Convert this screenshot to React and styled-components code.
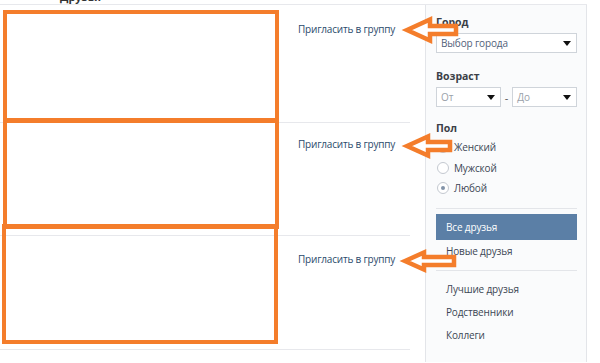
import React from "react";
import styled, { createGlobalStyle } from "styled-components";

const Global = createGlobalStyle`
  html, body { margin: 0; padding: 0; background: #fff; }
  body { font-family: "Open Sans", "Liberation Sans", Arial, sans-serif; }
`;

const ORANGE = "#f47d2b";

const Page = styled.div`
  position: relative;
  width: 600px;
  height: 363px;
  overflow: hidden;
  background: #fff;
`;

const Header = styled.div`
  width: 587px;
  height: 5px;
  overflow: hidden;
  border-bottom: 1px solid #e7e8ec;
  padding-left: 60px;
  box-sizing: border-box;
`;

const HeaderTitle = styled.div`
  margin-top: -10px;
  font-size: 11px;
  line-height: 14px;
  font-weight: 700;
  color: #333;
`;

const Body = styled.div`
  display: flex;
  align-items: stretch;
  height: 357px;
`;

const Content = styled.div`
  width: 425px;
  display: flex;
  flex-direction: column;
`;

const Row = styled.div`
  height: ${(p) => p.$h}px;
  box-sizing: border-box;
  padding-top: ${(p) => p.$pad}px;
  padding-left: 298px;
  margin-right: 15px;
  border-bottom: 1px solid #e7e8ec;
  font-size: 10px;
  line-height: 13px;
`;

const InviteLink = styled.a`
  display: block;
  font-size: 10px;
  line-height: 13px;
  letter-spacing: -0.2px;
  color: #2b4a6b;
  text-decoration: none;
  cursor: pointer;
`;

const Sidebar = styled.aside`
  width: 162px;
  box-sizing: border-box;
  background: #fafbfc;
  border-left: 1px solid #e3e5e9;
  border-right: 1px solid #e3e5e9;
  padding: 10px 9px 0 10px;
  display: flex;
  flex-direction: column;
`;

const Label = styled.div`
  font-size: 10.5px;
  line-height: 14px;
  font-weight: 700;
  color: #3a3f47;
  margin-top: ${(p) => p.$mt || 0}px;
`;

const SelectBox = styled.div`
  height: 20px;
  box-sizing: border-box;
  border: 1px solid #cfd4da;
  background: #fff;
  display: flex;
  align-items: center;
  justify-content: space-between;
  padding: 0 5px 0 4px;
  font-size: 10px;
  letter-spacing: -0.15px;
  color: ${(p) => (p.$muted ? "#9aa1a9" : "#52627a")};
  flex: ${(p) => (p.$grow ? 1 : "none")};
`;

const Caret = styled.span`
  width: 0;
  height: 0;
  border-left: 4px solid transparent;
  border-right: 4px solid transparent;
  border-top: 5px solid #111;
`;

const FieldGap = styled.div`
  margin-top: 4px;
`;

const AgeRow = styled.div`
  display: flex;
  align-items: center;
  gap: 4px;
  margin-top: 4px;
`;

const Dash = styled.span`
  font-size: 11px;
  color: #555;
`;

const RadioList = styled.div`
  display: flex;
  flex-direction: column;
  margin-top: 2px;
`;

const RadioRow = styled.div`
  display: flex;
  align-items: center;
  height: 20.5px;
  gap: 5px;
  font-size: 10px;
  letter-spacing: -0.15px;
  color: #3c4654;
`;

const RadioCircle = styled.span`
  width: 12px;
  height: 12px;
  box-sizing: border-box;
  border-radius: 50%;
  border: 1px solid #c4c9d0;
  background: #fff;
  display: flex;
  align-items: center;
  justify-content: center;
  margin-left: 1px;
  &::after {
    content: "";
    width: 4px;
    height: 4px;
    border-radius: 50%;
    background: ${(p) => (p.$on ? "#8293a8" : "transparent")};
  }
`;

const Divider = styled.div`
  height: 1px;
  background: #e3e5e9;
  margin: ${(p) => p.$m};
`;

const MenuItem = styled.div`
  height: ${(p) => (p.$active ? 26 : 23)}px;
  display: flex;
  align-items: center;
  padding-left: 10px;
  font-size: 10px;
  letter-spacing: -0.15px;
  color: ${(p) => (p.$active ? "#fff" : "#3c4654")};
  background: ${(p) => (p.$active ? "#5b7fa6" : "transparent")};
`;

const Frame = styled.div`
  position: absolute;
  box-sizing: border-box;
  border: 4.5px solid ${ORANGE};
  left: ${(p) => p.$x}px;
  top: ${(p) => p.$y}px;
  width: ${(p) => p.$w}px;
  height: ${(p) => p.$h}px;
  pointer-events: none;
`;

const ArrowLayer = styled.svg`
  position: absolute;
  left: 0;
  top: 0;
  pointer-events: none;
`;

const rows = [
  { h: 118, pad: 18 },
  { h: 113, pad: 15 },
  { h: 114, pad: 17 },
];

const frames = [
  { x: 3, y: 10, w: 276, h: 113 },
  { x: 3, y: 118, w: 276, h: 111 },
  { x: 2, y: 224, w: 276, h: 120 },
];

function arrow(tipX, tipY, headX, headHalf, shaftHalf, endX) {
  return [
    [tipX, tipY],
    [headX, tipY - headHalf],
    [headX, tipY - shaftHalf],
    [endX, tipY - shaftHalf],
    [endX, tipY + shaftHalf],
    [headX, tipY + shaftHalf],
    [headX, tipY + headHalf],
  ]
    .map((p) => p.join(","))
    .join(" ");
}

const arrows = [
  arrow(407, 30, 430, 10.5, 4, 456),
  arrow(407, 146, 428, 9.5, 4, 450),
  arrow(405, 261, 424, 8.5, 4, 454),
];

export default function App() {
  return (
    <Page>
      <Global />
      <Header>
        <HeaderTitle>Друзья</HeaderTitle>
      </Header>
      <Body>
        <Content>
          {rows.map((r, i) => (
            <Row key={i} $h={r.h} $pad={r.pad}>
              <InviteLink>Пригласить в группу</InviteLink>
            </Row>
          ))}
        </Content>
        <Sidebar>
          <Label>Город</Label>
          <FieldGap>
            <SelectBox>
              Выбор города
              <Caret />
            </SelectBox>
          </FieldGap>
          <Label $mt={16}>Возраст</Label>
          <AgeRow>
            <SelectBox $grow $muted>
              От
              <Caret />
            </SelectBox>
            <Dash>-</Dash>
            <SelectBox $grow $muted>
              До
              <Caret />
            </SelectBox>
          </AgeRow>
          <Label $mt={14}>Пол</Label>
          <RadioList>
            <RadioRow>
              <RadioCircle />
              Женский
            </RadioRow>
            <RadioRow>
              <RadioCircle />
              Мужской
            </RadioRow>
            <RadioRow>
              <RadioCircle $on />
              Любой
            </RadioRow>
          </RadioList>
          <Divider $m="9px 0 5px" />
          <MenuItem $active>Все друзья</MenuItem>
          <MenuItem>Новые друзья</MenuItem>
          <Divider $m="7px 0 7px" />
          <MenuItem>Лучшие друзья</MenuItem>
          <MenuItem>Родственники</MenuItem>
          <MenuItem>Коллеги</MenuItem>
        </Sidebar>
      </Body>
      {frames.map((f, i) => (
        <Frame key={i} $x={f.x} $y={f.y} $w={f.w} $h={f.h} />
      ))}
      <ArrowLayer width="600" height="363" viewBox="0 0 600 363">
        {arrows.map((pts, i) => (
          <polygon
            key={i}
            points={pts}
            fill="#fff"
            stroke={ORANGE}
            strokeWidth="4.5"
            strokeLinejoin="miter"
          />
        ))}
      </ArrowLayer>
    </Page>
  );
}
